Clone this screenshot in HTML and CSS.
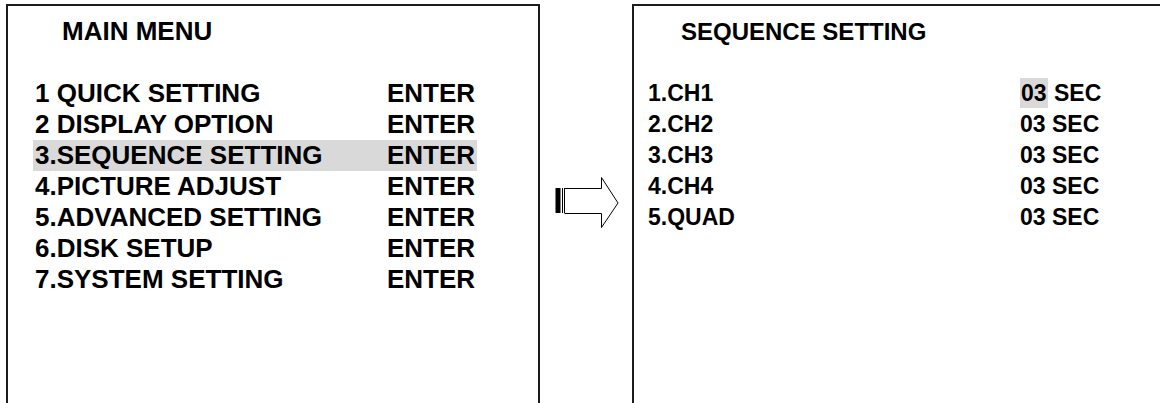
FILE: index.html
```html
<!DOCTYPE html>
<html lang="en">

<head>
    <meta charset="UTF-8">
    <meta name="viewport" content="width=device-width, initial-scale=1.0">
    <title>DVR Menu - Sequence Setting</title>
    <link rel="stylesheet" href="styles.css">
</head>

<body>
    <div class="screens">
        <section class="panel main-menu">
            <h1>MAIN MENU</h1>
            <ul class="menu-list">
                <li><span>1 QUICK SETTING</span><span>ENTER</span></li>
                <li><span>2 DISPLAY OPTION</span><span>ENTER</span></li>
                <li class="selected"><span>3.SEQUENCE SETTING</span><span>ENTER</span></li>
                <li><span>4.PICTURE ADJUST</span><span>ENTER</span></li>
                <li><span>5.ADVANCED SETTING</span><span>ENTER</span></li>
                <li><span>6.DISK SETUP</span><span>ENTER</span></li>
                <li><span>7.SYSTEM SETTING</span><span>ENTER</span></li>
            </ul>
        </section>

        <div class="arrow">
            <svg width="66" height="54" viewBox="0 0 66 54">
                <rect x="0.5" y="11" width="5" height="25" fill="#000"/>
                <line x1="7.5" y1="11" x2="7.5" y2="36" stroke="#000" stroke-width="1"/>
                <line x1="9.5" y1="11" x2="9.5" y2="36" stroke="#000" stroke-width="1"/>
                <path d="M9.5 11.5 H46.5 V0.5 L63 26 L46.5 50.5 V36.5 H9.5" fill="none" stroke="#000" stroke-width="1"/>
            </svg>
        </div>

        <section class="panel sequence">
            <h2>SEQUENCE SETTING</h2>
            <ul class="seq-list">
                <li><span>1.CH1</span><span><span class="cursor">03</span> SEC</span></li>
                <li><span>2.CH2</span><span>03 SEC</span></li>
                <li><span>3.CH3</span><span>03 SEC</span></li>
                <li><span>4.CH4</span><span>03 SEC</span></li>
                <li><span>5.QUAD</span><span>03 SEC</span></li>
            </ul>
        </section>
    </div>
</body>

</html>
```

FILE: styles.css
```css
body {
    margin: 0;
    background: #fff;
    color: #000;
    font-family: "Liberation Sans", Arial, sans-serif;
    font-weight: bold;
    overflow: hidden;
}
.screens {
    display: flex;
    height: 403px;
    box-sizing: border-box;
    padding: 4px 0 0 6px;
}
.panel {
    box-sizing: border-box;
    height: 399px;
    border: 2px solid #1c1c1c;
    border-bottom: none;
}
.main-menu {
    flex: none;
    width: 534px;
    padding-top: 10px;
}
.main-menu h1 {
    margin: 0 0 31px 54px;
    font-size: 26px;
    line-height: 31px;
}
ul {
    list-style: none;
    margin: 0;
    padding: 0;
}
.menu-list {
    padding-left: 25px;
    font-size: 26px;
    line-height: 31px;
}
.menu-list li {
    display: grid;
    grid-template-columns: 352px auto;
    width: fit-content;
    padding: 0 2px;
}
.menu-list li.selected {
    background: #d9d9d9;
}
.arrow {
    flex: none;
    width: 92px;
    padding: 173px 0 0 15px;
    box-sizing: border-box;
}
.sequence {
    flex: 1;
    min-width: 0;
    border-right: none;
    padding-top: 10px;
}
.sequence h2 {
    margin: 0 0 31px 47px;
    font-size: 24px;
    line-height: 31px;
}
.seq-list {
    padding-left: 14px;
    font-size: 23px;
    line-height: 31px;
}
.seq-list li {
    display: grid;
    grid-template-columns: 372px auto;
}
.cursor {
    background: #d9d9d9;
    padding: 2px 1px;
}
```
